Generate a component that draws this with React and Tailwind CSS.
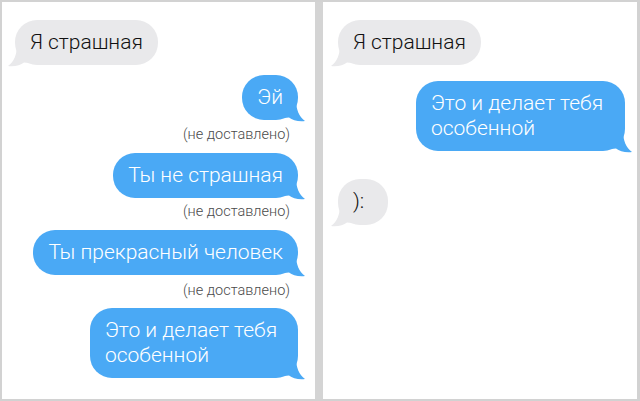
import React from "react";

const font = { fontFamily: "'Roboto Light', Roboto, 'Noto Sans', sans-serif" };

function Tail({ side, color }) {
  // small curved tail hanging off the bottom corner of a bubble
  const pos = side === "right" ? "right-[-8px]" : "left-[-8px] -scale-x-100";
  return (
    <svg
      className={`absolute bottom-[-2px] ${pos}`}
      width="22"
      height="22"
      viewBox="0 0 22 22"
    >
      <path
        d="M0 0 H12 C12 9 15 17 21 21 C14 21.8 8.5 20 5 17.5 L0 18 Z"
        fill={color}
      />
    </svg>
  );
}

function Bubble({ me, children, className = "" }) {
  const color = me ? "#4aa9f5" : "#e9e9eb";
  return (
    <div
      className={`relative rounded-[22px] px-[15px] py-[10px] text-[21px] font-light leading-[25px] ${
        me ? "bg-[#4aa9f5] text-white" : "bg-[#e9e9eb] text-[#111]"
      } ${className}`}
    >
      <Tail side={me ? "right" : "left"} color={color} />
      <span className="relative">{children}</span>
    </div>
  );
}

function Status({ className = "" }) {
  return (
    <div className={`self-end text-[14.5px] font-light leading-[16px] text-[#4a4a4a] pr-[8px] ${className}`}>
      (не доставлено)
    </div>
  );
}

export default function App() {
  return (
    <div
      className="w-[640px] h-[401px] flex bg-white border-l-2 border-t-2 border-r-[3px] border-b-2 border-[#d2d2d2]"
      style={font}
    >
      <div className="w-[313px] flex flex-col pt-[18px] pl-[13px] pr-[17px]">
        <Bubble className="self-start">Я страшная</Bubble>
        <Bubble me className="self-end mt-[10px]">Эй</Bubble>
        <Status className="mt-[7px]" />
        <Bubble me className="self-end mt-[10px]">Ты не страшная</Bubble>
        <Status className="mt-[6px]" />
        <Bubble me className="self-end mt-[10px]">Ты прекрасный человек</Bubble>
        <Status className="mt-[8px]" />
        <Bubble me className="self-end mt-[9px] w-[208px]">
          Это и делает тебя особенной
        </Bubble>
      </div>
      <div className="w-[8px] bg-[#d4d4d4]" />
      <div className="flex-1 flex flex-col pt-[18px] pl-[15px] pr-[12px]">
        <Bubble className="self-start">Я страшная</Bubble>
        <Bubble me className="self-end mt-[16px] w-[209px]">
          Это и делает тебя особенной
        </Bubble>
        <Bubble className="self-start mt-[28px] w-[50px] h-[46px]">):</Bubble>
      </div>
    </div>
  );
}
